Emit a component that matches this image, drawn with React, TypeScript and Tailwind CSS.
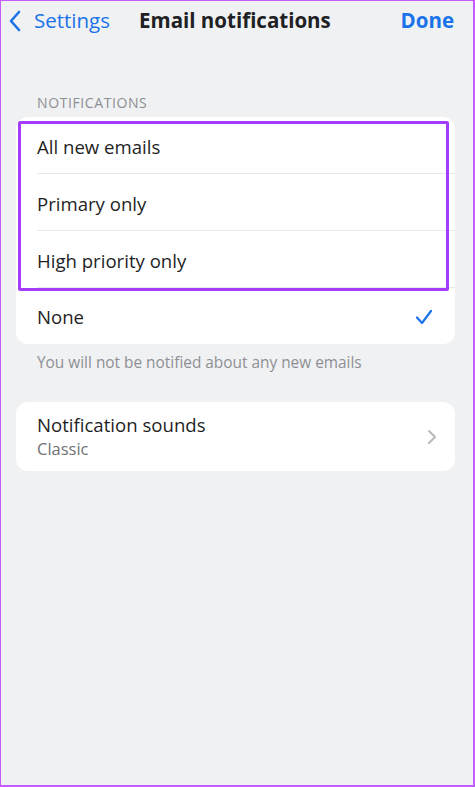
import React from "react";

const font = { fontFamily: "'Open Sans', Roboto, 'Liberation Sans', sans-serif" };

export default function App() {
  return (
    <div
      className="w-[475px] h-[787px] bg-[#f0f1f3] border-l border-t border-r-2 border-b-2 border-[#c35cff] flex flex-col"
      style={font}
    >
      {/* Header */}
      <div className="h-[39px] flex items-center pl-[7px] pr-[19px] relative">
        <svg width="14" height="22" viewBox="0 0 14 22" className="shrink-0">
          <path d="M11 2 L3 11 L11 20" fill="none" stroke="#1a73e8" strokeWidth="2.6" strokeLinecap="round" strokeLinejoin="round" />
        </svg>
        <span className="ml-[12px] text-[20.5px] text-[#1a73e8]">Settings</span>
        <span className="ml-[29px] text-[20.5px] font-bold text-[#202124]">Email notifications</span>
        <span className="ml-auto text-[20.5px] font-bold text-[#1a73e8]">Done</span>
      </div>

      <div className="pl-[36px] mt-[54px] text-[14px] text-[#8d8e92] tracking-[0.6px] leading-[17px]">NOTIFICATIONS</div>

      {/* Card 1 */}
      <div className="ml-[15px] mr-[18px] mt-[6px] bg-white rounded-[12px] relative">
        <div className="h-[56px] flex items-center pl-[21px] pt-[3px] text-[18.6px] text-[#1f1f1f]">All new emails</div>
        <div className="ml-[21px] h-px bg-[#e8e8ea]" />
        <div className="h-[56px] flex items-center pl-[21px] pt-[3px] text-[18.6px] text-[#1f1f1f]">Primary only</div>
        <div className="ml-[21px] h-px bg-[#e8e8ea]" />
        <div className="h-[56px] flex items-center pl-[21px] pt-[3px] text-[18.6px] text-[#1f1f1f]">High priority only</div>
        <div className="ml-[21px] h-px bg-[#e8e8ea]" />
        <div className="h-[56px] flex items-center pl-[21px] pr-[22px] pt-[2px] text-[18.6px] text-[#1f1f1f]">
          <span>None</span>
          <svg width="18" height="16" viewBox="0 0 18 16" className="ml-auto">
            <path d="M2 8.5 L7 14 L16 2" fill="none" stroke="#1a73e8" strokeWidth="2.2" strokeLinecap="round" strokeLinejoin="round" />
          </svg>
        </div>
        <div className="absolute left-[2px] top-[4px] right-[6px] h-[170px] border-[3px] border-[#a43cff] rounded-[2px] pointer-events-none" />
      </div>

      <div className="pl-[36px] mt-[10px] text-[15.4px] text-[#8e8f93] leading-[18px]">You will not be notified about any new emails</div>

      {/* Card 2 */}
      <div className="ml-[15px] mr-[18px] mt-[30px] bg-white rounded-[12px] h-[69px] flex items-center pl-[21px] pr-[18px]">
        <div className="flex flex-col">
          <span className="text-[18.6px] text-[#1f1f1f] leading-[22px]">Notification sounds</span>
          <span className="text-[16.5px] text-[#707174] leading-[22px] mt-[2px]">Classic</span>
        </div>
        <svg width="10" height="16" viewBox="0 0 10 16" className="ml-auto">
          <path d="M2 2 L8 8 L2 14" fill="none" stroke="#b8b8bc" strokeWidth="2" strokeLinecap="round" strokeLinejoin="round" />
        </svg>
      </div>
    </div>
  );
}
